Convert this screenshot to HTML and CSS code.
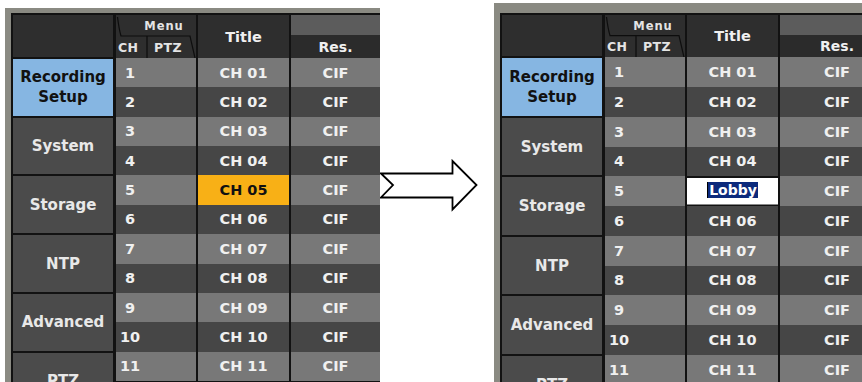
FILE: index.html
```html
<!DOCTYPE html>
<html>
<head>
<meta charset="utf-8">
<link rel="stylesheet" href="styles.css">
</head>
<body>
<div class="scene">
  <section class="panel panel-a">
    <div class="frame">
      <div class="menu">
        <div class="menu-head"></div>
        <div class="menu-item active">Recording<br>Setup</div>
        <div class="menu-item">System</div>
        <div class="menu-item">Storage</div>
        <div class="menu-item">NTP</div>
        <div class="menu-item">Advanced</div>
        <div class="menu-item">PTZ</div>
      </div>
      <div class="data">
        <div class="row head">
          <div class="cell tabs">
            <svg class="tab-lines" viewBox="0 0 80 43" preserveAspectRatio="none"><path d="M1.5 2 Q3 14 5 21 L74 21 L79 43 M31 21 V43" fill="none" stroke="#0d0d0d" stroke-width="1.2"/></svg>
            <div class="tab-top">Menu</div>
            <div class="tab-bottom"><span class="tab-ch">CH</span><span class="tab-ptz">PTZ</span></div>
          </div>
          <div class="cell title-h">Title</div>
          <div class="cell res-h"><div class="res-top"></div><div class="res-label">Res.</div></div>
        </div>
        <div class="row"><div class="cell"><span class="num">1</span></div><div class="cell">CH 01</div><div class="cell">CIF</div></div>
        <div class="row"><div class="cell"><span class="num">2</span></div><div class="cell">CH 02</div><div class="cell">CIF</div></div>
        <div class="row"><div class="cell"><span class="num">3</span></div><div class="cell">CH 03</div><div class="cell">CIF</div></div>
        <div class="row"><div class="cell"><span class="num">4</span></div><div class="cell">CH 04</div><div class="cell">CIF</div></div>
        <div class="row"><div class="cell"><span class="num">5</span></div><div class="cell hl">CH 05</div><div class="cell">CIF</div></div>
        <div class="row"><div class="cell"><span class="num">6</span></div><div class="cell">CH 06</div><div class="cell">CIF</div></div>
        <div class="row"><div class="cell"><span class="num">7</span></div><div class="cell">CH 07</div><div class="cell">CIF</div></div>
        <div class="row"><div class="cell"><span class="num">8</span></div><div class="cell">CH 08</div><div class="cell">CIF</div></div>
        <div class="row"><div class="cell"><span class="num">9</span></div><div class="cell">CH 09</div><div class="cell">CIF</div></div>
        <div class="row"><div class="cell"><span class="num">10</span></div><div class="cell">CH 10</div><div class="cell">CIF</div></div>
        <div class="row"><div class="cell"><span class="num">11</span></div><div class="cell">CH 11</div><div class="cell">CIF</div></div>
      </div>
    </div>
  </section>

  <svg class="arrow" width="114" height="382" viewBox="0 0 114 382"><polygon points="1,173.5 13,185 1,197.5 72.5,197.5 72.5,209.5 96.5,185 72.5,161 72.5,173.5" fill="#fff" stroke="#000" stroke-width="1.8" stroke-linejoin="miter"/></svg>

  <section class="panel panel-b">
    <div class="frame">
      <div class="menu">
        <div class="menu-head"></div>
        <div class="menu-item active">Recording<br>Setup</div>
        <div class="menu-item">System</div>
        <div class="menu-item">Storage</div>
        <div class="menu-item">NTP</div>
        <div class="menu-item">Advanced</div>
        <div class="menu-item">PTZ</div>
      </div>
      <div class="data">
        <div class="row head">
          <div class="cell tabs">
            <svg class="tab-lines" viewBox="0 0 80 43" preserveAspectRatio="none"><path d="M1.5 2 Q3 14 5 21 L74 21 L79 43 M31 21 V43" fill="none" stroke="#0d0d0d" stroke-width="1.2"/></svg>
            <div class="tab-top">Menu</div>
            <div class="tab-bottom"><span class="tab-ch">CH</span><span class="tab-ptz">PTZ</span></div>
          </div>
          <div class="cell title-h">Title</div>
          <div class="cell res-h"><div class="res-top"></div><div class="res-label">Res.</div></div>
        </div>
        <div class="row"><div class="cell"><span class="num">1</span></div><div class="cell">CH 01</div><div class="cell">CIF</div></div>
        <div class="row"><div class="cell"><span class="num">2</span></div><div class="cell">CH 02</div><div class="cell">CIF</div></div>
        <div class="row"><div class="cell"><span class="num">3</span></div><div class="cell">CH 03</div><div class="cell">CIF</div></div>
        <div class="row"><div class="cell"><span class="num">4</span></div><div class="cell">CH 04</div><div class="cell">CIF</div></div>
        <div class="row"><div class="cell"><span class="num">5</span></div><div class="cell edit"><span class="sel">Lobby</span></div><div class="cell">CIF</div></div>
        <div class="row"><div class="cell"><span class="num">6</span></div><div class="cell">CH 06</div><div class="cell">CIF</div></div>
        <div class="row"><div class="cell"><span class="num">7</span></div><div class="cell">CH 07</div><div class="cell">CIF</div></div>
        <div class="row"><div class="cell"><span class="num">8</span></div><div class="cell">CH 08</div><div class="cell">CIF</div></div>
        <div class="row"><div class="cell"><span class="num">9</span></div><div class="cell">CH 09</div><div class="cell">CIF</div></div>
        <div class="row"><div class="cell"><span class="num">10</span></div><div class="cell">CH 10</div><div class="cell">CIF</div></div>
        <div class="row"><div class="cell"><span class="num">11</span></div><div class="cell">CH 11</div><div class="cell">CIF</div></div>
      </div>
    </div>
  </section>
</div>
</body>
</html>
```

FILE: styles.css
```css
* { box-sizing: border-box; margin: 0; padding: 0; }

body {
  margin: 0;
  background: #ffffff;
  font-family: "DejaVu Sans", Verdana, sans-serif;
  font-weight: bold;
}

.scene {
  display: flex;
  align-items: flex-start;
  width: 862px;
  height: 382px;
  overflow: hidden;
}

.panel {
  background: #8a8a82;
  flex-shrink: 0;
}

.panel-a {
  margin: 8px 0 0 5px;
  padding: 5px 0 0 6px;
  width: 375px;
  --row: 29.37px;
  --head: 43px;
}

.panel-b {
  margin-top: 3px;
  padding: 10px 0 0 6px;
  width: 400px;
  --row: 29.75px;
  --head: 42.3px;
}

.frame {
  background: #121212;
  padding: 2px 0 0 2px;
  display: flex;
  align-items: flex-start;
}

.menu {
  width: 103px;
  border-right: 3px solid #121212;
  display: flex;
  flex-direction: column;
  flex-shrink: 0;
}

.menu-head {
  height: calc(var(--head) - 1px);
  background: #2e2e2e;
}

.menu-item {
  height: calc(var(--row) * 2);
  flex-shrink: 0;
  border-top: 2px solid #121212;
  background: #4b4b4b;
  color: #e8e8e8;
  display: flex;
  align-items: center;
  justify-content: center;
  text-align: center;
  font-size: 15px;
  line-height: 20px;
}

.menu-item.active {
  background: #86b6e2;
  color: #111111;
}

.data {
  flex: 1;
}

.row {
  display: grid;
  grid-template-columns: 80px 93px 1fr;
  height: var(--row);
  font-size: 14.5px;
  color: #f0f0f0;
}

.row:nth-child(even) { background: #787878; }
.row:nth-child(odd) { background: #464646; }

.row.head {
  height: var(--head);
  background: #2e2e2e;
}

.cell {
  display: flex;
  align-items: center;
  justify-content: center;
  white-space: nowrap;
}

.cell + .cell {
  border-left: 2px solid #121212;
}

.row .cell:first-child {
  justify-content: flex-start;
}

.num {
  width: 28px;
  text-align: center;
}

.cell.hl {
  background: #f8b016;
  color: #111111;
}

.cell.edit {
  background: #ffffff;
  box-shadow: inset 0 2px 0 #121212, inset 0 -1.5px 0 #121212;
}

.sel {
  background: #0c2a7c;
  color: #ffffff;
  border-left: 1px solid #000000;
  padding: 0 1px;
  line-height: 16px;
  font-size: 14px;
  margin-bottom: 2px;
}

/* header */
.tabs {
  position: relative;
  flex-direction: column;
  align-items: stretch;
  justify-content: flex-start;
  color: #e4e4e4;
}

.tab-lines {
  position: absolute;
  left: 0;
  top: 0;
  width: 80px;
  height: 100%;
}

.tab-top {
  height: 21px;
  padding-left: 16px;
  display: flex;
  align-items: center;
  justify-content: center;
  font-size: 11.5px;
  letter-spacing: 1px;
}

.tab-bottom {
  flex: 1;
  display: flex;
  align-items: center;
  font-size: 12.5px;
  letter-spacing: 0.4px;
}

.tab-ch {
  width: 31px;
  padding-left: 2px;
}

.tab-ptz {
  padding-left: 7px;
}

.title-h {
  font-size: 14.5px;
  color: #f0f0f0;
}

.res-h {
  flex-direction: column;
  align-items: stretch;
}

.res-top {
  height: 20px;
  background: #5c5c5c;
}

.res-label {
  flex: 1;
  background: #2b2b2b;
  display: flex;
  align-items: center;
  justify-content: center;
  font-size: 14px;
  color: #f0f0f0;
}

.arrow {
  flex-shrink: 0;
  display: block;
}
```
